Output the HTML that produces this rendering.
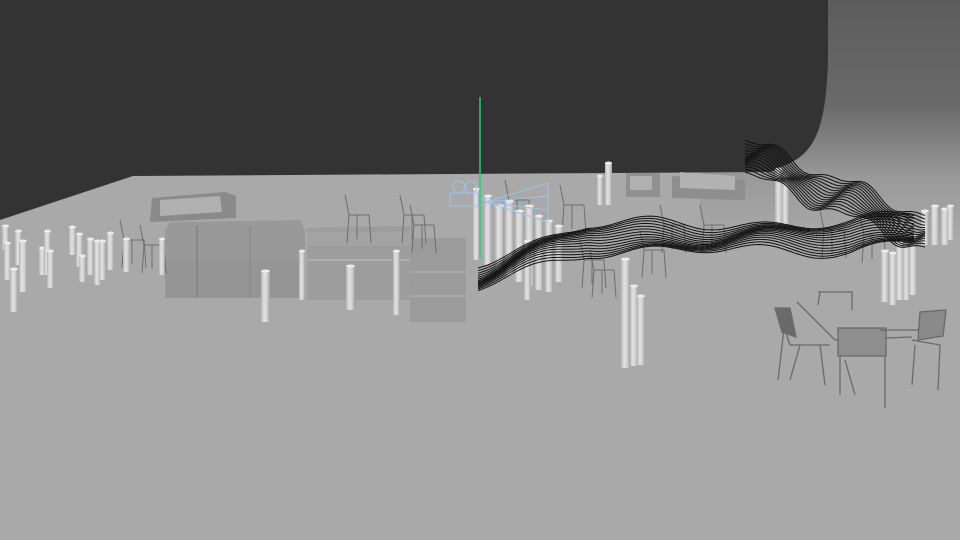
<!DOCTYPE html>
<html><head><meta charset="utf-8"><style>
html,body{margin:0;padding:0;width:960px;height:540px;overflow:hidden;background:#a9a9a9}
svg{display:block}
</style></head><body>
<svg id="s" width="960" height="540" viewBox="0 0 960 540" xmlns="http://www.w3.org/2000/svg">
<defs>
<linearGradient id="bg" x1="0" y1="0" x2="0" y2="1">
<stop offset="0" stop-color="#5c5c5c"/><stop offset="0.45" stop-color="#6a6a6a"/><stop offset="0.75" stop-color="#999"/><stop offset="1" stop-color="#a8a8a8"/>
</linearGradient>
<linearGradient id="cyl" x1="0" y1="0" x2="1" y2="0">
<stop offset="0" stop-color="#b4b4b4"/><stop offset="0.35" stop-color="#e2e2e2"/><stop offset="0.7" stop-color="#cfcfcf"/><stop offset="1" stop-color="#9e9e9e"/>
</linearGradient>
</defs>
<rect width="960" height="540" fill="#a9a9a9"/>
<rect x="700" y="0" width="260" height="235" fill="url(#bg)"/>
<path d="M0 0 H828 V60 C826 120 818 150 790 163 L770 172 L133 176 L0 220 Z" fill="#333"/>
<g>
<path d="M170 222 L300 220 L305 230 V298 H165 V230 Z" fill="#999"/>
<rect x="165" y="262" width="135" height="36" fill="#959595"/>
<line x1="197" y1="226" x2="197" y2="298" stroke="#777"/>
<line x1="250" y1="225" x2="250" y2="298" stroke="#888"/>
<path d="M307 228 L410 226 L410 300 L307 300 Z" fill="#9d9d9d"/>
<rect x="307" y="232" width="103" height="14" fill="#a3a3a3"/>
<line x1="307" y1="260" x2="410" y2="260" stroke="#bdbdbd"/>
<rect x="410" y="238" width="56" height="84" fill="#9b9b9b"/>
<line x1="410" y1="272" x2="466" y2="272" stroke="#b5b5b5"/>
<line x1="410" y1="296" x2="466" y2="296" stroke="#b5b5b5"/>
<path d="M152 198 L225 192 L236 196 L236 218 L150 222 Z" fill="#8a8a8a"/>
<path d="M160 200 L220 196 L222 212 L160 216 Z" fill="#b0b0b0"/>
<path d="M672 176 L745 180 L745 200 L672 198 Z" fill="#8e8e8e"/>
<path d="M680 172 L735 176 L735 190 L680 188 Z" fill="#b2b2b2"/>
<rect x="626" y="173" width="34" height="24" fill="#909090"/>
<rect x="630" y="176" width="22" height="14" fill="#b0b0b0"/>
</g>
<g id="chairs" stroke="#6e6e6e" stroke-width="1" fill="none"></g>
<g id="pil"></g>
<g id="wave" stroke="#111" stroke-width="1" fill="none"></g>
<g stroke="#9fc2ee" stroke-width="1" fill="none">
<circle cx="459" cy="187" r="6"/><circle cx="471" cy="187" r="6"/>
<rect x="450" y="193" width="28" height="13"/>
<path d="M478 200 L486 198 L486 206 L478 204"/>
<path d="M486 202 L548 183 L548 222 Z M486 202 L548 196 M486 202 L548 210"/>
</g>
<line x1="480" y1="97" x2="480" y2="258" stroke="#3fbf7f" stroke-width="1.5"/>
<g stroke="#6a6a6a" stroke-width="1.3" fill="none">
<path d="M797 302 L835 340 L912 337"/>
<rect x="838" y="328" width="48" height="28" fill="#8e8e8e"/>
<path d="M778 310 L790 345 L830 345 M785 320 L778 380 M800 345 L790 380 M820 345 L825 385"/>
<path d="M775 308 L790 308 L796 337 L782 332Z" fill="#6a6a6a"/>
<path d="M920 312 L946 310 L943 336 L918 340Z" fill="#8a8a8a"/>
<path d="M912 340 L940 345 L938 390 M915 345 L912 385 M880 330 L918 330"/>
<path d="M840 356 L840 395 M885 356 L885 408 M845 360 L855 395"/>
<path d="M818 292 L852 292 L852 310 M820 292 L818 305"/>
</g>
</svg>
<script>
const NS="http://www.w3.org/2000/svg";
const pil=document.getElementById('pil');
const P=[[3,225,250,5],[5,242,280,5],[16,230,265,5],[20,240,292,6],[11,268,312,6],[40,247,275,5],[45,230,275,5],[48,250,288,5],[70,226,255,5],[77,233,267,5],[80,255,282,5],[88,238,275,5],[95,240,285,5],[100,240,280,5],[108,232,270,5],[124,238,272,5],
[262,270,322,7],[347,265,310,7],[394,250,315,5],[300,250,300,4],[160,238,275,4],
[474,188,260,5],[485,195,265,6],[496,205,270,7],[506,200,275,7],[516,210,282,7],[526,205,286,7],[536,215,290,6],[546,220,292,6],[556,225,282,6],[598,175,205,4],[606,162,205,5],[622,258,368,7],[631,285,366,6],[638,295,365,6],
[776,168,225,6],[783,175,225,5],[882,250,302,6],[890,252,305,6],[897,240,300,6],[904,245,300,5],[910,235,295,6],[922,210,245,6],[932,205,245,6],[942,208,245,6],[948,205,240,5],[525,240,300,5]];
P.forEach(p=>{const w=p[3]+2;const r=document.createElementNS(NS,'rect');r.setAttribute('x',p[0]-1);r.setAttribute('y',p[1]);r.setAttribute('width',w);r.setAttribute('height',p[2]-p[1]);r.setAttribute('rx',1.5);r.setAttribute('fill','url(#cyl)');pil.appendChild(r);
const e=document.createElementNS(NS,'ellipse');e.setAttribute('cx',p[0]-1+w/2);e.setAttribute('cy',p[1]+1);e.setAttribute('rx',w/2);e.setAttribute('ry',1.5);e.setAttribute('fill','#ececec');pil.appendChild(e);});
const w=document.getElementById('wave');
function band(xs,yf,n,gap){for(let i=0;i<n;i++){let d='';xs.forEach((x,j)=>{d+=(j?'L':'M')+x+' '+(yf(x,i)+i*gap).toFixed(1)+' ';});const pa=document.createElementNS(NS,'path');pa.setAttribute('d',d);w.appendChild(pa);}}
const xs=[];for(let x=478;x<=915;x+=4)xs.push(x);
band(xs,(x,i)=>{let y=262-38*Math.min(1,(x-478)/110)+5*Math.sin(x/18)+3*Math.sin(x/37+i*0.3);if(x>850)y-=(x-850)*0.15;return y;},15,1.9);
const xs2=[];for(let x=745;x<=925;x+=3)xs2.push(x);
band(xs2,(x,i)=>{let y=140+(x-745)*0.42+6*Math.sin(x/14)+3*Math.sin(x/7+i*0.4);return y;},15,2.4);
const ch=document.getElementById('chairs');
const C=[[120,220],[140,225],[345,195],[400,195],[410,205],[505,180],[560,185],[580,240],[640,230],[660,205],[700,205],[820,210],[860,215],[590,250]];
C.forEach(c=>{const g=document.createElementNS(NS,'path');const [x,y]=c;g.setAttribute('d',`M${x} ${y} L${x+4} ${y+20} L${x+24} ${y+20} M${x+4} ${y+20} L${x+2} ${y+48} M${x+24} ${y+20} L${x+26} ${y+48} M${x+12} ${y+20} L${x+12} ${y+44}`);ch.appendChild(g);});
</script>
</body></html>
